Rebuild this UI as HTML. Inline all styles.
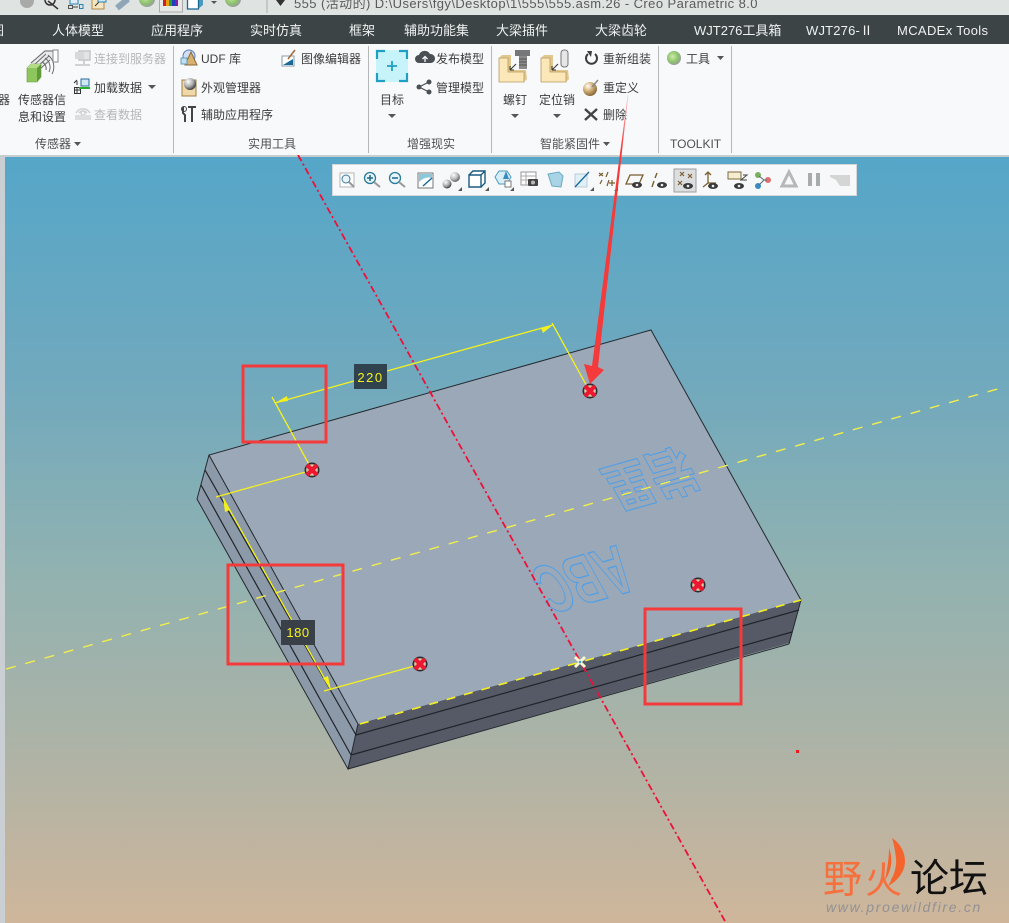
<!DOCTYPE html>
<html lang="zh"><head><meta charset="utf-8"><title>Creo Parametric</title>
<style>
html,body{margin:0;padding:0;background:#f8f9fb}
body{width:1009px;height:923px;overflow:hidden}
svg{display:block}
text{font-family:"Liberation Sans","Noto Sans CJK SC",sans-serif}
.tab{fill:#f0f2f2;font-size:13px}
.r{fill:#3c3c3c;font-size:12px}
.d{fill:#b5b7b9;font-size:12px}
.g{fill:#505050;font-size:12px}
</style></head><body>
<svg width="1009" height="923" viewBox="0 0 1009 923" xmlns="http://www.w3.org/2000/svg">
<defs>
<linearGradient id="bg" x1="0" y1="0" x2="0" y2="1">
<stop offset="0" stop-color="#55a6c9"/><stop offset=".3" stop-color="#71a9bd"/><stop offset=".55" stop-color="#92b2b0"/><stop offset=".78" stop-color="#aeb3a6"/><stop offset="1" stop-color="#cfb69b"/></linearGradient>
<linearGradient id="arrow" gradientUnits="userSpaceOnUse" x1="0" y1="95" x2="0" y2="150"><stop offset="0" stop-color="#f9c8c8"/><stop offset="1" stop-color="#f43a3a"/></linearGradient>
<radialGradient id="ball" cx=".4" cy=".4" r=".6"><stop offset="0" stop-color="#cfeaa8"/><stop offset=".65" stop-color="#8cc46c"/><stop offset="1" stop-color="#9a9f9a"/></radialGradient>
<radialGradient id="tan" cx=".35" cy=".3" r=".7"><stop offset="0" stop-color="#fff"/><stop offset=".45" stop-color="#d8b77e"/><stop offset="1" stop-color="#8a6a3a"/></radialGradient>
<radialGradient id="grey" cx=".35" cy=".3" r=".7"><stop offset="0" stop-color="#fff"/><stop offset=".6" stop-color="#aaa"/><stop offset="1" stop-color="#444"/></radialGradient>
<g id="hole"><circle r="7.500" fill="#2a2d33"/><circle r="5.800" fill="#e0c9a0"/><path d="M-5-5 5 5M5-5-5 5" stroke="#ee1630" stroke-width="4.200"/></g>
<g id="eye"><ellipse rx="5" ry="3" fill="#3a3a3a"/><circle r="1.300" fill="#eee"/></g>
<polygon id="crn" points="0,0 0,-4 -4,0" fill="#555"/>
</defs>

<!-- viewport -->
<rect x="0" y="155" width="1009" height="768" fill="url(#bg)"/>
<rect x="0" y="155" width="5" height="768" fill="#c9cfd2"/>
<rect x="0" y="155" width="1009" height="2" fill="#c8cdd0"/>

<!-- model -->
<polygon points="209,455 197,499 348,769 358,724" fill="#8c99a8"/>
<polygon points="358,724 801,600 789,643 348,769" fill="#555a66"/>
<polygon points="209,455 651,330 801,600 358,724" fill="#9aa8b8"/>
<g fill="none" stroke="#25292f" stroke-width="1">
<polyline points="358,724 209,455 651,330 801,600"/>
<polyline points="209,455 197,499 348,769 358,724" />
<line x1="348" y1="769" x2="789" y2="644"/>
<line x1="789" y1="644" x2="801" y2="600"/>
</g>
<g fill="none" stroke="#20242a" stroke-width="1.200">
<line x1="205" y1="470" x2="356" y2="735"/><line x1="201" y1="485" x2="351" y2="755"/>
<line x1="356" y1="735" x2="799" y2="610"/><line x1="351" y1="755" x2="792" y2="632"/>
</g>

<!-- engraved text -->
<text transform="matrix(-.837 .236 -.705 -1.267 617 545)" x="0" y="0" font-size="50" font-weight="700" fill="none" stroke="#4f9fe8" stroke-width=".9" style="font-family:'Liberation Sans',sans-serif">ABC</text>
<text transform="matrix(-1.058 .298 -.68 -1.224 683 449)" x="0" y="0" font-size="40" font-weight="700" fill="none" stroke="#4f9fe8" stroke-width=".8" style="font-family:'Noto Sans CJK SC',sans-serif">岩里</text>

<!-- yellow axis & edges -->
<line x1="6" y1="669" x2="1001" y2="388" stroke="#f2ee4a" stroke-width="1.400" stroke-dasharray="10 10"/>
<line x1="360" y1="724" x2="801" y2="600" stroke="#f6f020" stroke-width="1.600" stroke-dasharray="9 9"/>

<!-- red axis -->
<line x1="298" y1="155" x2="726" y2="923" stroke="#ee1038" stroke-width="1.800" stroke-dasharray="7 3 2 3"/>

<!-- dimensions -->
<g stroke="#f4f01e" stroke-width="1.300" fill="none">
<line x1="272" y1="397" x2="311" y2="468"/>
<line x1="552" y1="323" x2="589" y2="390"/>
<line x1="275" y1="403" x2="354" y2="381"/><line x1="387" y1="371" x2="553" y2="325"/>
<line x1="216" y1="497" x2="309" y2="471"/>
<line x1="223" y1="498" x2="331" y2="690"/>
<line x1="324" y1="691" x2="418" y2="665"/>
</g>
<g fill="#f4f01e">
<polygon points="275,403 287,396 288,401"/><polygon points="553,325 541,328 543,333"/>
<polygon points="223,498 230,510 225,512"/><polygon points="331,690 323,678 328,676"/>
</g>
<rect x="354" y="364" width="33" height="25" fill="#2f424e"/>
<text x="370.500" y="382" font-size="13" fill="#f6f21e" text-anchor="middle" letter-spacing="1.500">220</text>
<rect x="281" y="620" width="34" height="25" fill="#3a4048"/>
<text x="298" y="637" font-size="13" fill="#f6f21e" text-anchor="middle" letter-spacing=".5">180</text>

<use href="#hole" x="312" y="470"/><use href="#hole" x="590" y="391"/><use href="#hole" x="420" y="664"/><use href="#hole" x="698" y="585"/>
<path d="M575 657 585 667M585 657 575 667" stroke="#fbf6d0" stroke-width="3"/><circle cx="580" cy="662" r="1.300" fill="#3aa0e0"/>

<!-- annotations -->
<g fill="none" stroke="#f43a3a" stroke-width="3">
<rect x="243" y="366" width="83" height="76"/>
<rect x="228" y="565" width="115" height="99"/>
<rect x="645" y="609" width="96" height="95"/>
</g>
<rect x="796" y="750" width="3" height="3" fill="#f01818"/>

<!-- title bar -->
<rect x="0" y="0" width="1009" height="15" fill="#dfe3e2"/>
<circle cx="27" cy="1" r="7" fill="#a8aaa8"/>
<path d="M48 1 58 9" stroke="#333" stroke-width="1.500"/><circle cx="50" cy="0" r="5" fill="none" stroke="#333" stroke-width="1.500"/>
<rect x="70" y="-2" width="8" height="6" fill="#dfeefa" stroke="#2a82ae"/><rect x="68.500" y="5.500" width="4" height="3" fill="none" stroke="#555"/><rect x="79.500" y="4.500" width="3.500" height="4" fill="none" stroke="#2a82ae"/><path d="M73 7H78" stroke="#444"/>
<rect x="92" y="-2" width="12" height="11" fill="#f6e6c0" stroke="#b08a48"/><path d="M95 6 100 1" stroke="#333"/><rect x="98" y="-2" width="8" height="4" fill="#cfe8f6" stroke="#2a82ae"/>
<path d="M117 8 128-1" stroke="#8fa6b8" stroke-width="6"/>
<circle cx="147" cy="-1" r="8" fill="url(#ball)"/>
<rect x="159.500" y="-2" width="23" height="14" fill="#e6e8e8" stroke="#aaa"/>
<g><rect x="163" y="0" width="3" height="6" fill="#c22"/><rect x="166" y="0" width="3" height="6" fill="#e8a010"/><rect x="169" y="0" width="3" height="6" fill="#2a9a30"/><rect x="172" y="0" width="3" height="6" fill="#2040c0"/><rect x="175" y="0" width="3" height="6" fill="#8020a0"/></g>
<polygon points="198,-2 203,-2 203,5 198,9" fill="#4a9ac0"/>
<rect x="187.500" y="-2" width="11" height="11" fill="#fff" stroke="#1a6a96" stroke-width="1.300"/>
<polygon points="211,1 217,1 214,4" fill="#555"/>
<circle cx="233" cy="-1" r="8" fill="url(#ball)"/>
<line x1="267" y1="0" x2="267" y2="13" stroke="#a8acac"/>
<polygon points="276,0 285,0 280.500,6" fill="#333"/>
<text x="294" y="8" font-size="13" fill="#5a5a5a" letter-spacing=".42">555 (活动的) D:\Users\fgy\Desktop\1\555\555.asm.26 - Creo Parametric 8.0</text>

<!-- tab bar -->
<rect x="0" y="15" width="1009" height="29" fill="#3c4446"/>
<g class="tab">
<text class="tab" x="-9" y="35">图</text>
<text class="tab" x="52" y="35">人体模型</text>
<text class="tab" x="151" y="35">应用程序</text>
<text class="tab" x="250" y="35">实时仿真</text>
<text class="tab" x="349" y="35">框架</text>
<text class="tab" x="404" y="35">辅助功能集</text>
<text class="tab" x="496" y="35">大梁插件</text>
<text class="tab" x="595" y="35">大梁齿轮</text>
<text class="tab" x="694" y="35">WJT276工具箱</text>
<text class="tab" x="806" y="35" textLength="67">WJT276-Ⅱ</text>
<text class="tab" x="897" y="35" textLength="91">MCADEx Tools</text>
</g>

<!-- ribbon -->
<rect x="0" y="44" width="1009" height="111" fill="#f8f9fb"/>
<g stroke="#b4b8b8"><line x1="173.500" y1="46" x2="173.500" y2="153"/><line x1="368.500" y1="46" x2="368.500" y2="153"/><line x1="491.500" y1="46" x2="491.500" y2="153"/><line x1="658.500" y1="46" x2="658.500" y2="153"/><line x1="731.500" y1="46" x2="731.500" y2="153"/></g>

<text class="r" x="-2" y="104">器</text>
<text class="r" x="18" y="104">传感器信</text>
<text class="r" x="18" y="121">息和设置</text>
<text class="d" x="94" y="63">连接到服务器</text>
<text class="r" x="94" y="92">加载数据</text>
<text class="d" x="94" y="119">查看数据</text>
<text class="g" x="35" y="148">传感器</text>
<polygon points="74,142 81,142 77.500,146" fill="#555"/>
<polygon points="148,85 156,85 152,89" fill="#555"/>

<!-- sensor icon -->
<polygon points="30,63 44,50 54,50 54,56 47,63 40,70" fill="#e8eaec"/>
<g fill="none" stroke="#6a6a6a" stroke-width="1">
<path d="M31 63 45 51H54M34 65 46 54M37 67 49 56M40 69 50 60"/>
<path d="M42 62A7 7 0 0 1 46 70M45 58A11 11 0 0 1 49 72M48 55A15 15 0 0 1 52 74"/>
</g>
<rect x="53" y="50" width="5" height="12" fill="#fff" stroke="#888"/>
<polygon points="27,68 31,64 41,64 41,77 37,82 27,82" fill="#8cc65c" stroke="#6a9a40" stroke-width=".6"/>
<polygon points="37,68 41,64 41,77 37,82" fill="#5f9a3a"/>
<polygon points="27,68 31,64 41,64 37,68" fill="#b4dc88"/>
<!-- small grey / colored icons -->
<g fill="none" stroke="#c4c6c8" stroke-width="1.500"><rect x="79" y="51" width="11" height="9" fill="#e2e4e6"/><path d="M84 60V64M75 65H90"/></g>
<rect x="75" y="52" width="9" height="7" fill="#d6d8da"/>
<g fill="none" stroke="#333"><rect x="74.500" y="87.500" width="6" height="6"/><path d="M74 90H81M77 88V94M77 85V81M74 83 77 80"/></g>
<rect x="81" y="79" width="8" height="7" fill="#cfe8f6" stroke="#2a6a9a"/><path d="M79 88H90" stroke="#28b028" stroke-width="2"/>
<g fill="none" stroke="#cfd1d3" stroke-width="1.500"><path d="M76 113A8 8 0 0 1 90 113M79 113A5 5 0 0 1 87 113"/><circle cx="83" cy="113" r="2"/></g>
<rect x="75" y="115" width="16" height="5" fill="#dcdee0"/>

<!-- utility -->
<text class="r" x="201" y="63">UDF 库</text>
<text class="r" x="201" y="92">外观管理器</text>
<text class="r" x="201" y="119">辅助应用程序</text>
<text class="r" x="301" y="63">图像编辑器</text>
<text class="g" x="248" y="148">实用工具</text>
<circle cx="189" cy="56" r="6" fill="#cfe0f4" stroke="#5a7ac0"/><polygon points="191,52 197,65 185,65" fill="#d8b070" stroke="#8a6a3a"/><rect x="181" y="58" width="6" height="6" fill="#bfe0f0" stroke="#6a9ab8"/>
<path d="M182 80H196V96H182Z" fill="#f0d8a8" stroke="#a08048"/><circle cx="190" cy="84" r="6" fill="url(#grey)"/>
<path d="M183 107V113L185 115V122M192 107V122M188 107H196" fill="none" stroke="#444" stroke-width="2"/><circle cx="184" cy="109" r="2.500" fill="none" stroke="#444"/>
<rect x="282" y="56" width="12" height="10" fill="#fff" stroke="#8a9aa8"/><polygon points="283,65 293,59 293,65" fill="#1a6a96"/><path d="M288 59 295 50" stroke="#a06a3a" stroke-width="1.500"/>

<!-- AR -->
<rect x="376" y="50" width="32" height="32" fill="#c6f4fa"/>
<path d="M377 59V51H385M399 51H407V59M407 73V81H399M385 81H377V73" fill="none" stroke="#1f9fc4" stroke-width="2.200"/>
<path d="M392 61V71M387 66H397" stroke="#1f9fc4" stroke-width="1.800"/>
<text class="r" x="380" y="104">目标</text>
<polygon points="388,114 396,114 392,118" fill="#555"/>
<text class="r" x="436" y="63">发布模型</text>
<text class="r" x="436" y="92">管理模型</text>
<text class="g" x="407" y="148">增强现实</text>
<path d="M419 63A4 4 0 0 1 419 55A6 6 0 0 1 430 54A4.500 4.500 0 0 1 431 63Z" fill="#4a5054"/><path d="M425 62V57M422.500 59 425 56.500 427.500 59" stroke="#f8f9fb" stroke-width="1.300" fill="none"/>
<g fill="#4a5054"><circle cx="419" cy="87" r="2.500"/><circle cx="429" cy="82" r="2.500"/><circle cx="429" cy="92" r="2.500"/></g><path d="M419 87 429 82M419 87 429 92" stroke="#4a5054" stroke-width="1.200"/>

<!-- fasteners -->
<g>
<polygon points="499,58 502,55 511,55 511,70 526,70 527,79 524,82 499,82" fill="#e2c88e"/>
<path d="M499 58H508V72H524V82H499Z" fill="#fbe7b8" stroke="#b89c60" stroke-width=".8"/>
<polygon points="541,58 544,55 553,55 553,70 568,70 569,79 566,82 541,82" fill="#e2c88e"/>
<path d="M541 58H550V72H566V82H541Z" fill="#fbe7b8" stroke="#b89c60" stroke-width=".8"/>
</g>
<path d="M510 70 516 64M510 70V66M510 70H514M552 70 558 64M552 70V66M552 70H556" stroke="#333" fill="none"/>
<rect x="515" y="50" width="15" height="6" fill="#777"/><rect x="519" y="56" width="8" height="13" fill="#8a8a8a"/><path d="M519 59H527M519 62H527M519 65H527" stroke="#555"/>
<rect x="561" y="50" width="7" height="17" rx="3" fill="#e6e6e6" stroke="#777"/>
<text class="r" x="503" y="104">螺钉</text>
<text class="r" x="539" y="104">定位销</text>
<polygon points="511,114 519,114 515,118" fill="#555"/><polygon points="553,114 561,114 557,118" fill="#555"/>
<text class="r" x="603" y="63">重新组装</text>
<text class="r" x="603" y="92">重定义</text>
<text class="r" x="603" y="119">删除</text>
<path d="M588 54A5.500 5.500 0 1 0 595 54" fill="none" stroke="#3c3c3c" stroke-width="2"/><polygon points="587,51 592,51 591,57" fill="#3c3c3c"/>
<circle cx="590" cy="89" r="7" fill="url(#tan)"/><path d="M592 87 598 80" stroke="#888" stroke-width="1.500"/>
<path d="M585 109 597 120M597 109 585 120" stroke="#444" stroke-width="2.400"/>
<text class="g" x="540" y="148">智能紧固件</text>
<polygon points="603,142 610,142 606.500,146" fill="#555"/>
<circle cx="674" cy="58" r="7" fill="url(#ball)"/>
<text class="r" x="686" y="63">工具</text>
<polygon points="717,56 724,56 720.500,60" fill="#555"/>
<text class="g" x="670" y="148">TOOLKIT</text>

<!-- floating toolbar -->
<rect x="332.500" y="164.500" width="524" height="31" fill="#f7f8f9" stroke="#d4d8da"/>
<rect x="674" y="169" width="22" height="23" fill="#dcdee0" stroke="#9a9c9e"/>
<!-- zoom box -->
<rect x="340" y="173" width="14" height="14" fill="#fff" stroke="#b0b4b8"/><circle cx="346" cy="179" r="4" fill="#e8f4fa" stroke="#3a7a9a"/><path d="M349 182 354 187" stroke="#999" stroke-width="2"/>
<circle cx="370" cy="178" r="5.500" fill="#e8f4fa" stroke="#2a7a9a" stroke-width="1.300"/><path d="M367 178H373M370 175V181" stroke="#1a6a8a" stroke-width="1.500"/><path d="M374 182 380 187" stroke="#999" stroke-width="2"/>
<circle cx="395" cy="178" r="5.500" fill="#e8f4fa" stroke="#2a7a9a" stroke-width="1.300"/><path d="M392 178H398" stroke="#1a6a8a" stroke-width="1.500"/><path d="M399 182 405 187" stroke="#999" stroke-width="2"/>
<g transform="translate(2 0)"><rect x="416" y="173" width="15" height="15" fill="#fff" stroke="#777"/><path d="M417 174H430V178Q423 176 417 182Z" fill="#8cc8dc"/><path d="M421 186 430 178" stroke="#1a6a96" stroke-width="1.500"/></g>
<g transform="translate(2 0)"><circle cx="445" cy="184" r="4.500" fill="url(#grey)"/><circle cx="453" cy="177" r="5" fill="url(#grey)" opacity=".8"/><use href="#crn" x="460" y="191"/></g>
<g transform="translate(1 0)"><path d="M468 175H480V187H468ZM468 175 472 171H484V183L480 187M480 175 484 171" fill="#fff" stroke="#1a5a80" stroke-width="1.400"/><use href="#crn" x="488" y="191"/></g>
<g transform="translate(1 0)"><polygon points="494,177 498,171 506,171 510,177 506,184 498,184" fill="#d8eef6" stroke="#4a9ac0"/><path d="M505 171 508 179H502Z" fill="#3a8ac0"/><rect x="504" y="181" width="6" height="6" fill="#fff" stroke="#777"/><use href="#crn" x="513" y="191"/></g>
<g transform="translate(2 0)"><g stroke="#999" fill="#fff"><rect x="519" y="172" width="15" height="13"/></g><path d="M519 176H534M519 180H530M524 172V185" stroke="#aaa"/><rect x="526" y="179" width="10" height="7" rx="1" fill="#444"/><circle cx="531" cy="182.500" r="2" fill="#bbb"/></g>
<g transform="translate(3 0)"><polygon points="545,174 556,172 560,176 558,187 549,186" fill="#a8d4e6" stroke="#6aaac4"/></g>
<g transform="translate(4 0)"><rect x="571" y="174" width="12" height="13" fill="#dff1f7" stroke="#bcd"/><path d="M571 187 585 172" stroke="#1a6a96" stroke-width="1.300"/><use href="#crn" x="590" y="191"/></g>
<g transform="translate(3 0)"><g stroke="#7a5e30" stroke-width="1.200" fill="none"><path d="M596 173 600 176M600 173 596 176M605 172 603 177M597 184 599 180M604 186 606 180M606 183H612M609 180V186"/></g><use href="#crn" x="615" y="191"/></g>
<g transform="translate(1 0)"><polygon points="625,184 629,175 642,175 638,184" fill="none" stroke="#7a5e30" stroke-width="1.300"/><use href="#eye" x="636" y="185"/></g>
<g transform="translate(4 0)"><path d="M653 173 651 178M650 181 648 187" stroke="#7a5e30" stroke-width="1.400"/><use href="#eye" x="658" y="185"/></g>
<g transform="translate(3 0)"><path d="M677 172 681 176M681 172 677 176M685 174 689 178M689 174 685 178M675 181 679 185M679 181 675 185" stroke="#7a5e30" stroke-width="1.200"/><use href="#eye" x="685" y="186"/></g>
<g transform="translate(5 0)"><path d="M703 173V183M703 183 698 187M703 183H711M700 175 703 172 706 175" stroke="#7a5e30" stroke-width="1.300" fill="none"/><use href="#eye" x="708" y="186"/></g>
<g transform="translate(4 0)"><rect x="724" y="172" width="13" height="7" fill="#f6ecd0" stroke="#7a6a40"/><path d="M739 175H743L737 180H743" stroke="#444" fill="none"/><use href="#eye" x="735" y="186"/></g>
<g transform="translate(6 0)"><circle cx="752" cy="175" r="3" fill="#7ab060"/><circle cx="762" cy="180" r="3" fill="#e07070"/><circle cx="752" cy="186" r="3" fill="#3a8ac0"/><path d="M753 176 758 180H761M758 180 753 185" stroke="#5a6a70" fill="none"/></g>
<g transform="translate(6 0)"><polygon points="783,172 790,186 776,186" fill="none" stroke="#b4b8b8" stroke-width="3"/></g>
<g transform="translate(5 0)"><rect x="803" y="173" width="4" height="13" fill="#a8acac"/><rect x="811" y="173" width="4" height="13" fill="#a8acac"/></g>
<g transform="translate(4 0)"><path d="M826 175H846V186H836L832 180 826 177Z" fill="#d4d6d6"/></g>

<!-- red arrow (over ribbon and toolbar) -->
<polygon points="627.700,95 628.300,95 598,367 604,370 590,384 584,364 592,366" fill="url(#arrow)"/>

<!-- logo -->
<text x="823" y="893" font-size="39" fill="#f6703e" style="font-family:'Noto Sans CJK SC',sans-serif;font-weight:400">野</text>
<text x="865" y="893" font-size="37" fill="#f6703e" style="font-family:'Noto Sans CJK SC',sans-serif;font-weight:400">火</text>
<text x="910" y="892" font-size="39" fill="#111" style="font-family:'Noto Sans CJK SC',sans-serif;font-weight:400">论坛</text>
<path d="M892 838C903 845 907 858 904 868C901 877 894 883 888 886C893 878 897 868 896 858C895 851 894 844 892 838Z" fill="#f4652e"/>
<path d="M889 848C893 858 892 870 885 880C887 870 889 860 889 848Z" fill="#f4652e"/>
<text x="826" y="912" font-size="14" font-style="italic" letter-spacing="1.700" fill="#929294">www.proewildfire.cn</text>
</svg>
</body></html>
